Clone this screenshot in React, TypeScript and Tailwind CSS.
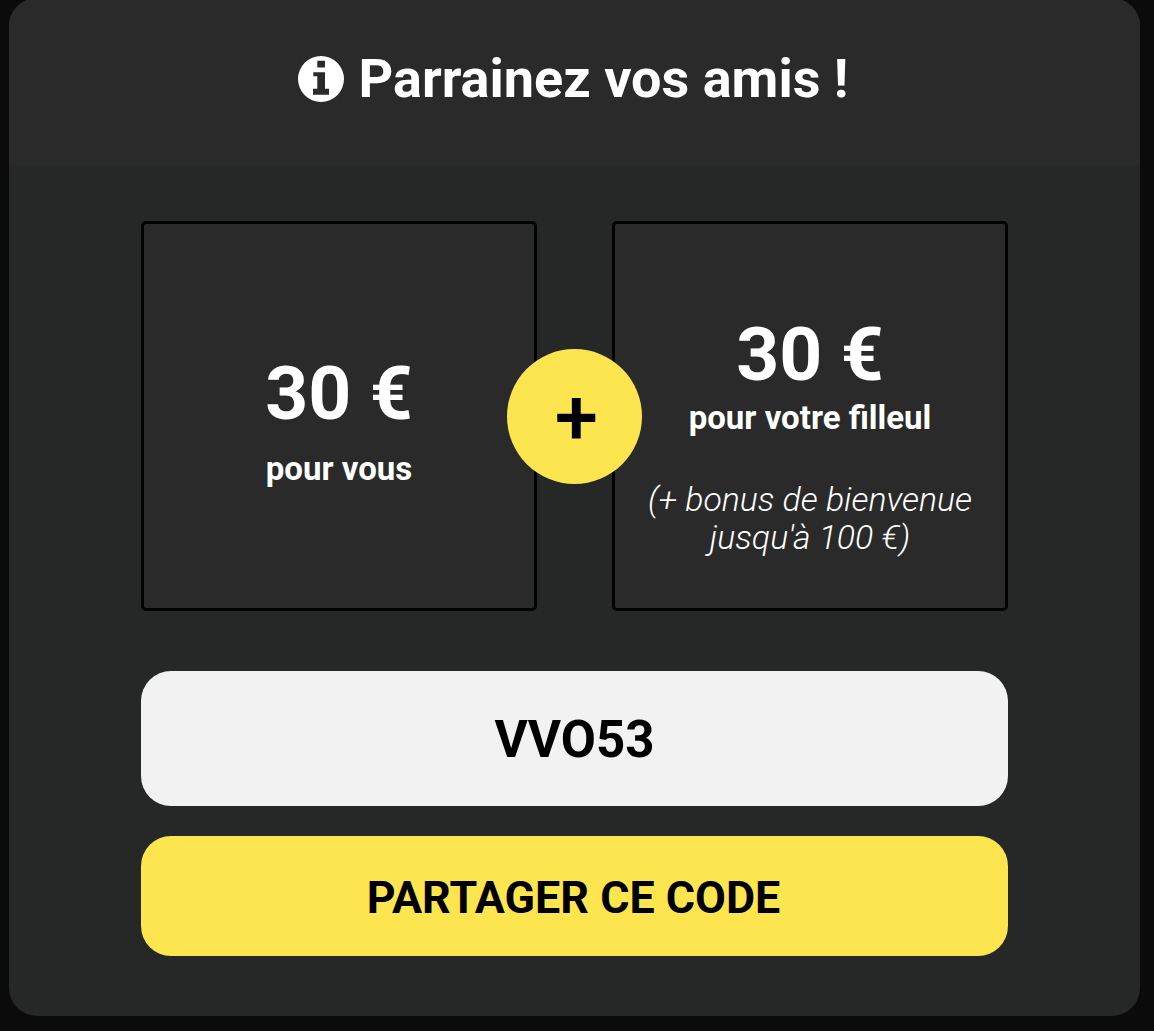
function InfoIcon() {
  return (
    <svg width="46" height="46" viewBox="0 0 46 46" className="shrink-0">
      <path
        fill="#fff"
        fillRule="evenodd"
        d="M23 0a23 23 0 1 1 0 46a23 23 0 1 1 0-46ZM19.3 4.8V11.5H27V4.8ZM15.3 16.2V20.2H19.3V32.8H15V38.8H31V32.8H27V16.2Z"
      />
    </svg>
  )
}

export default function App() {
  return (
    <div className="h-[1031px] overflow-hidden bg-[#0b0b0b] pl-[9px] font-['Roboto',sans-serif]">
      <div className="-mt-[2px] h-[1018px] w-[1131px] overflow-hidden rounded-[28px] bg-[#252826]">
        {/* Titre */}
        <div className="flex h-[167px] items-center justify-center gap-[15px] bg-[#2a2a2a] pb-[5px] pr-[3px] text-white">
          <InfoIcon />
          <h1 className="text-[54px] font-bold leading-none">Parrainez vos amis !</h1>
        </div>

        <div className="px-[132px] pt-[56px]">
          {/* Montants */}
          <div className="relative flex justify-between">
            <div className="flex h-[390px] w-[396px] flex-col items-center rounded-[5px] border-[3px] border-black bg-[#2a2a2a] pt-[132px] text-white">
              <p className="text-[75px] font-bold leading-[74px]">30 €</p>
              <p className="mt-[21px] text-[33px] font-bold leading-[36px]">pour vous</p>
            </div>

            <div className="flex h-[390px] w-[396px] flex-col items-center rounded-[5px] border-[3px] border-black bg-[#2a2a2a] pt-[93px] text-white">
              <p className="text-[75px] font-bold leading-[74px]">30 €</p>
              <p className="mt-[9px] text-[33px] font-bold leading-[36px]">pour votre filleul</p>
              <p className="mt-[45px] text-center text-[33.8px] font-light italic leading-[38px]">
                (+ bonus de bienvenue
                <br />
                jusqu'à 100 €)
              </p>
            </div>

            <div className="absolute left-[366px] top-[128px] flex h-[135px] w-[135px] items-center justify-center rounded-full bg-[#fde54f] pl-[4px] pt-[2px]">
              <span className="text-[78px] font-medium leading-none text-black">+</span>
            </div>
          </div>

          {/* Code */}
          <div className="mt-[60px] flex h-[135px] items-center justify-center rounded-[30px] bg-[#f2f2f2] pt-[3px] text-[51px] font-bold text-black">
            VVO53
          </div>

          <button className="mt-[30px] flex h-[120px] w-full items-center justify-center rounded-[30px] bg-[#fde54f] pr-[2px] pt-[3px] text-[44.8px] font-bold text-black">
            PARTAGER CE CODE
          </button>
        </div>
      </div>
    </div>
  )
}
